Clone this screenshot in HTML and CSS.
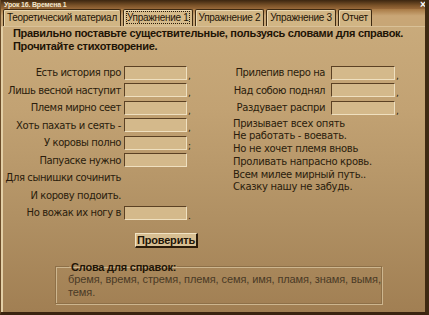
FILE: index.html
```html
<!DOCTYPE html>
<html lang="ru">
<head>
<meta charset="utf-8">
<link rel="stylesheet" href="styles.css">
</head>
<body>
<div class="window">
  <div class="titlebar">
    <span class="title">Урок 16. Времена 1</span>
    <span class="close">×</span>
  </div>
  <div class="tabs">
    <div class="tab">Теоретический материал</div>
    <div class="tab active"><span class="focus">Упражнение 1</span></div>
    <div class="tab">Упражнение 2</div>
    <div class="tab">Упражнение 3</div>
    <div class="tab">Отчет</div>
  </div>
  <div class="content">
    <div class="task">
      <div>Правильно поставьте существительные, пользуясь словами для справок.</div>
      <div>Прочитайте стихотворение.</div>
    </div>
    <div class="columns">
      <div class="left">
        <div class="row"><span class="lbl">Есть история про</span><span class="inp"></span><span class="pn">,</span></div>
        <div class="row"><span class="lbl">Лишь весной наступит</span><span class="inp"></span><span class="pn">,</span></div>
        <div class="row"><span class="lbl">Племя мирно сеет</span><span class="inp"></span><span class="pn">,</span></div>
        <div class="row"><span class="lbl">Хоть пахать и сеять -</span><span class="inp"></span><span class="pn">,</span></div>
        <div class="row"><span class="lbl">У коровы полно</span><span class="inp"></span><span class="pn">;</span></div>
        <div class="row"><span class="lbl">Папуаске нужно</span><span class="inp"></span><span class="pn"></span></div>
        <div class="row"><span class="lbl">Для сынишки сочинить</span><span class="inp none"></span><span class="pn"></span></div>
        <div class="row"><span class="lbl">И корову подоить.</span><span class="inp none"></span><span class="pn"></span></div>
        <div class="row"><span class="lbl">Но вожак их ногу в</span><span class="inp"></span><span class="pn">.</span></div>
      </div>
      <div class="right">
        <div class="row"><span class="lbl">Прилепив перо на</span><span class="inp"></span><span class="pn">,</span></div>
        <div class="row"><span class="lbl">Над собою поднял</span><span class="inp"></span><span class="pn">,</span></div>
        <div class="row"><span class="lbl">Раздувает распри</span><span class="inp"></span><span class="pn">,</span></div>
        <div class="verse">
          <div>Призывает всех опять</div>
          <div>Не работать - воевать.</div>
          <div>Но не хочет племя вновь</div>
          <div>Проливать напрасно кровь.</div>
          <div>Всем милее мирный путь..</div>
          <div>Сказку нашу не забудь.</div>
        </div>
      </div>
    </div>
    <div class="actions"><button class="check">Проверить</button></div>
    <fieldset class="words">
      <legend>Слова для справок:</legend>
      <div class="wordlist">бремя, время, стремя, племя, семя, имя, пламя, знамя, вымя,<br>темя.</div>
    </fieldset>
  </div>
</div>
</body>
</html>
```

FILE: styles.css
```css
* { box-sizing: border-box; }
html, body { margin: 0; padding: 0; }
body {
  width: 429px;
  height: 315px;
  overflow: hidden;
  font-family: "Liberation Sans", Arial, sans-serif;
  font-size: 11px;
  color: #2a1c0c;
}
.window {
  width: 429px;
  height: 315px;
  display: flex;
  flex-direction: column;
  background: linear-gradient(180deg, #cbad7e 0%, #c2a273 35%, #b09063 70%, #a17f53 100%);
  border-right: 4px solid #3f2a12;
  border-bottom: 3px solid #3a2410;
  border-left: 1px solid #6b4c28;
  overflow: hidden;
}
.titlebar {
  height: 9px;
  flex: none;
  background: linear-gradient(180deg, #3c2610 0%, #7a5228 60%, #99693a 100%);
  display: flex;
  align-items: center;
  justify-content: space-between;
  padding: 0 0 0 3px;
  margin-right: -4px;
}
.title {
  font-size: 7px;
  line-height: 9px;
  color: #f3e6cc;
  font-weight: bold;
  letter-spacing: -0.2px;
}
.close {
  font-size: 10px;
  line-height: 9px;
  color: #fff;
  font-weight: bold;
  width: 9px;
}
.tabs {
  flex: none;
  height: 18px;
  display: flex;
  align-items: flex-end;
  gap: 2px;
  padding-left: 2px;
  background: linear-gradient(180deg, #a87a45 0%, #c9a676 40%, #c7a676 100%);
  border-bottom: 1px solid #d9c198;
}
.tab {
  height: 17px;
  line-height: 15px;
  padding: 0 3px;
  font-size: 10px;
  letter-spacing: -0.3px;
  background: #d1b584;
  border: 1px solid #3e2a12;
  border-bottom: none;
  border-radius: 2px 2px 0 0;
  color: #1e1406;
  white-space: nowrap;
  box-shadow: inset 1px 1px 0 #ead7b0;
}
.tab.active { background: #d6bb8b; }
.focus {
  outline: 1px dotted #2a1a08;
  outline-offset: 0;
}
.content {
  flex: 1;
  padding: 0 0 0 10px;
  display: flex;
  flex-direction: column;
  border-left: 2px solid #e3cfa6;
}
.task {
  font-weight: bold;
  line-height: 13px;
  font-size: 11px;
  letter-spacing: -0.3px;
  color: #1e1406;
  white-space: nowrap;
}
.columns {
  display: flex;
  margin-top: 11px;
  font-family: "DejaVu Sans", sans-serif;
  font-size: 10px;
  letter-spacing: -0.4px;
}
.left { width: 220px; }
.row {
  height: 17.5px;
  display: flex;
  align-items: center;
}
.lbl {
  display: flex;
  justify-content: flex-end;
  white-space: nowrap;
  flex: none;
}
.left .lbl {
  width: 108px;
  margin-right: 3px;
}
.right .lbl {
  width: 92px;
  margin-right: 6px;
}
.inp {
  width: 63px;
  height: 14px;
  flex: none;
  background: #d4b98b;
  border-top: 1px solid #5b4124;
  border-left: 1px solid #5b4124;
  border-right: 1px solid #efe0c0;
  border-bottom: 1px solid #efe0c0;
}
.right .inp { width: 64px; }
.inp.none { visibility: hidden; }
.pn {
  width: 6px;
  align-self: flex-end;
  line-height: 12px;
  padding-left: 1px;
  font-size: 9px;
}
.verse {
  line-height: 12.8px;
  margin-top: 1px;
  white-space: nowrap;
  letter-spacing: -0.3px;
}
.actions {
  margin-top: 11px;
  padding-left: 122px;
}
.check {
  font-family: "Liberation Sans", Arial, sans-serif;
  font-size: 11px;
  font-weight: bold;
  letter-spacing: -0.2px;
  color: #1e1406;
  width: 63px;
  height: 15px;
  padding: 0;
  line-height: 13px;
  background: #d8bf92;
  border-top: 1px solid #f1e3c4;
  border-left: 1px solid #f1e3c4;
  border-right: 2px solid #2a1a08;
  border-bottom: 2px solid #2a1a08;
}
.words {
  margin: 13px 0 0 42px;
  width: 327px;
  height: 43px;
  padding: 0 0 0 12px;
  min-inline-size: 0;
  border: 1px solid #8e7048;
  box-shadow: 1px 1px 0 #cdb68f, inset 1px 1px 0 #cdb68f;
}
.words legend {
  font-weight: bold;
  padding: 0 1px 0 2px;
  margin-left: 1px;
  color: #1e1406;
  line-height: 12px;
  letter-spacing: -0.2px;
}
.wordlist {
  color: #4a3a26;
  line-height: 13.5px;
  margin-top: 0;
  white-space: nowrap;
  letter-spacing: -0.1px;
}
```
